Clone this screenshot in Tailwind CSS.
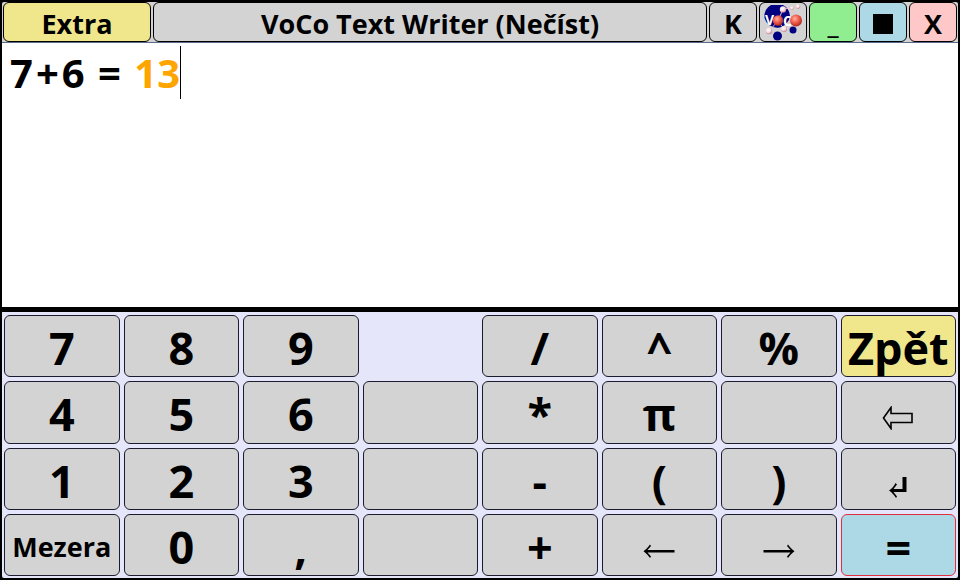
<!DOCTYPE html>
<html lang="cs">
<head>
    <meta charset="UTF-8">
    <meta name="viewport" content="width=device-width, initial-scale=1.0">
    <title>VoCo Text Writer</title>
    <script src="https://cdn.jsdelivr.net/npm/@tailwindcss/browser@4"></script>
</head>
<body class="bg-black font-['Open_Sans','Noto_Sans',sans-serif] font-bold text-black">
    <div class="flex min-h-screen flex-col overflow-hidden rounded-sm border-2 border-black">

        <!-- Title bar -->
        <header class="flex h-[41px] gap-0.5 border-b border-[#5a6b8c] bg-[#d3d3d3] px-px text-[27px] leading-10">
            <button type="button" class="w-[148px] rounded-md border border-black bg-[#f0e68c] leading-[42px]">Extra</button>
            <button type="button" class="flex-1 rounded-md border border-black bg-[#d3d3d3] leading-[42px]">VoCo Text Writer (Nečíst)</button>
            <button type="button" class="w-12 rounded-md border border-black bg-[#d3d3d3] leading-[42px]">K</button>
            <button type="button" aria-label="VoCo" class="w-12 rounded-md border border-black bg-[#d3d3d3]">
                <svg viewBox="1 1 46 38" class="block h-full w-full">
                    <defs>
                        <radialGradient id="red" cx="40%" cy="35%" r="65%">
                            <stop offset="0" stop-color="#ffb0a0" />
                            <stop offset="0.5" stop-color="#f06050" />
                            <stop offset="1" stop-color="#b02820" />
                        </radialGradient>
                        <radialGradient id="pink" cx="40%" cy="35%" r="65%">
                            <stop offset="0" stop-color="#ffffff" />
                            <stop offset="0.6" stop-color="#f6d8e0" />
                            <stop offset="1" stop-color="#c08090" />
                        </radialGradient>
                    </defs>
                    <path d="M12 3 H24 A13 13 0 0 1 31 14 A13 13 0 0 1 5.500 16 A13 13 0 0 1 12 3 Z" fill="#000080" />
                    <circle cx="18.500" cy="34" r="4.500" fill="#000080" />
                    <circle cx="34" cy="28" r="3.500" fill="#000080" />
                    <path d="M10 29 L19 19 L24 7 M19 19 L25 27 M37 19 L25 27 M37 19 L33 6 L39 4 M24 7 L33 6" stroke="#e8c0cc" stroke-width="1" fill="none" />
                    <circle cx="24" cy="7.500" r="3.200" fill="url(#pink)" />
                    <circle cx="10" cy="29" r="3.200" fill="url(#pink)" />
                    <circle cx="25" cy="27" r="3" fill="url(#pink)" />
                    <circle cx="33" cy="6" r="1.800" fill="url(#pink)" />
                    <circle cx="39" cy="4.500" r="2.200" fill="url(#pink)" />
                    <text x="6" y="23" font-size="14" fill="#fff">V</text>
                    <text x="24" y="24" font-size="14" fill="#fff">C</text>
                    <circle cx="19" cy="18.500" r="5.200" fill="url(#red)" />
                    <circle cx="37" cy="18.500" r="6" fill="url(#red)" />
                </svg>
            </button>
            <button type="button" class="w-12 rounded-md border border-black bg-[#90ee90] leading-[42px]">_</button>
            <button type="button" aria-label="Maximize" class="flex w-12 items-center justify-center rounded-md border border-black bg-[#add8e6] pt-1">
                <span class="h-5 w-5 bg-black"></span>
            </button>
            <button type="button" class="w-12 rounded-md border border-black bg-[#ffc8c8] leading-[42px]">X</button>
        </header>

        <!-- Written text, the computed result is orange -->
        <main class="flex flex-1 bg-white">
            <div contenteditable="true" role="textbox" aria-label="Text" class="flex-1 px-2 pt-[3px] text-[40px] leading-[53px] outline-none">7<span class="px-[3px]">+</span>6 <span class="px-[3px]">=</span> <span class="inline-block border-r border-black text-[#ffa500]">13</span></div>
        </main>

        <!-- Keyboard -->
        <div class="grid h-[271px] grid-cols-8 grid-rows-4 gap-1 border-t-5 border-black bg-[#e6e6fa] px-0.5 pt-[3px] pb-0.5 text-[45px] leading-none">
            <button type="button" class="rounded-md border border-[#1c1c30] bg-[#d3d3d3] pt-[3px]">7</button>
            <button type="button" class="rounded-md border border-[#1c1c30] bg-[#d3d3d3] pt-[3px]">8</button>
            <button type="button" class="rounded-md border border-[#1c1c30] bg-[#d3d3d3] pt-[3px]">9</button>
            <div></div>
            <button type="button" class="rounded-md border border-[#1c1c30] bg-[#d3d3d3] pt-[3px]">/</button>
            <button type="button" class="rounded-md border border-[#1c1c30] bg-[#d3d3d3] pt-[3px]">^</button>
            <button type="button" class="rounded-md border border-[#1c1c30] bg-[#d3d3d3] pt-[3px]">%</button>
            <button type="button" class="rounded-md border border-[#1c1c30] bg-[#f0e68c] pt-[3px]">Zpět</button>

            <button type="button" class="rounded-md border border-[#1c1c30] bg-[#d3d3d3] pt-[3px]">4</button>
            <button type="button" class="rounded-md border border-[#1c1c30] bg-[#d3d3d3] pt-[3px]">5</button>
            <button type="button" class="rounded-md border border-[#1c1c30] bg-[#d3d3d3] pt-[3px]">6</button>
            <button type="button" class="rounded-md border border-[#1c1c30] bg-[#d3d3d3] pt-[3px]"></button>
            <button type="button" class="rounded-md border border-[#1c1c30] bg-[#d3d3d3] pt-[3px]">*</button>
            <button type="button" class="rounded-md border border-[#1c1c30] bg-[#d3d3d3] pt-[3px]">π</button>
            <button type="button" class="rounded-md border border-[#1c1c30] bg-[#d3d3d3] pt-[3px]"></button>
            <button type="button" aria-label="Backspace" class="flex items-center justify-center rounded-md border border-[#1c1c30] bg-[#d3d3d3] pt-3">
                <svg viewBox="0 0 32 24" class="h-6 w-8" fill="none" stroke="#000" stroke-width="1.600">
                    <path d="M1.500 12 L9 1.500 V7.500 H30 V16.500 H9 V22.500 Z" />
                </svg>
            </button>

            <button type="button" class="rounded-md border border-[#1c1c30] bg-[#d3d3d3] pt-[3px]">1</button>
            <button type="button" class="rounded-md border border-[#1c1c30] bg-[#d3d3d3] pt-[3px]">2</button>
            <button type="button" class="rounded-md border border-[#1c1c30] bg-[#d3d3d3] pt-[3px]">3</button>
            <button type="button" class="rounded-md border border-[#1c1c30] bg-[#d3d3d3] pt-[3px]"></button>
            <button type="button" class="rounded-md border border-[#1c1c30] bg-[#d3d3d3] pt-[3px]">-</button>
            <button type="button" class="rounded-md border border-[#1c1c30] bg-[#d3d3d3] pt-[3px]">(</button>
            <button type="button" class="rounded-md border border-[#1c1c30] bg-[#d3d3d3] pt-[3px]">)</button>
            <button type="button" aria-label="Enter" class="flex items-center justify-center rounded-md border border-[#1c1c30] bg-[#d3d3d3] pt-4">
                <svg viewBox="0 0 20 24" class="h-6 w-5">
                    <path d="M14.500 2 H18.500 V17 H5.500 L9 21.500 L8 23 C6 20 4 17.500 1 15.500 C4 13.500 6 11 7.500 8 L9 9.500 L5.500 14 H14.500 Z" />
                </svg>
            </button>

            <button type="button" class="rounded-md border border-[#1c1c30] bg-[#d3d3d3] pt-[3px] text-[27px]">Mezera</button>
            <button type="button" class="rounded-md border border-[#1c1c30] bg-[#d3d3d3] pt-[3px]">0</button>
            <button type="button" class="rounded-md border border-[#1c1c30] bg-[#d3d3d3] pt-[3px]">,</button>
            <button type="button" class="rounded-md border border-[#1c1c30] bg-[#d3d3d3] pt-[3px]"></button>
            <button type="button" class="rounded-md border border-[#1c1c30] bg-[#d3d3d3] pt-[3px]">+</button>
            <button type="button" aria-label="Left" class="flex items-center justify-center rounded-md border border-[#1c1c30] bg-[#d3d3d3] pt-3">
                <svg viewBox="0 0 32 16" class="h-4 w-8">
                    <path d="M31.500 7 V9.500 H4.500 L8 13.500 L7 15 C5 12 3 10 .5 8.200 C3 6.500 5 4.500 7 1.500 L8 3 L4.500 7 Z" />
                </svg>
            </button>
            <button type="button" aria-label="Right" class="flex items-center justify-center rounded-md border border-[#1c1c30] bg-[#d3d3d3] pt-3">
                <svg viewBox="0 0 32 16" class="h-4 w-8">
                    <path d="M.5 7 V9.500 H27.500 L24 13.500 L25 15 C27 12 29 10 31.500 8.200 C29 6.500 27 4.500 25 1.500 L24 3 L27.500 7 Z" />
                </svg>
            </button>
            <button type="button" class="rounded-md border border-[#e03040] bg-[#add8e6] pt-[3px]">=</button>
        </div>
    </div>
</body>
</html>
